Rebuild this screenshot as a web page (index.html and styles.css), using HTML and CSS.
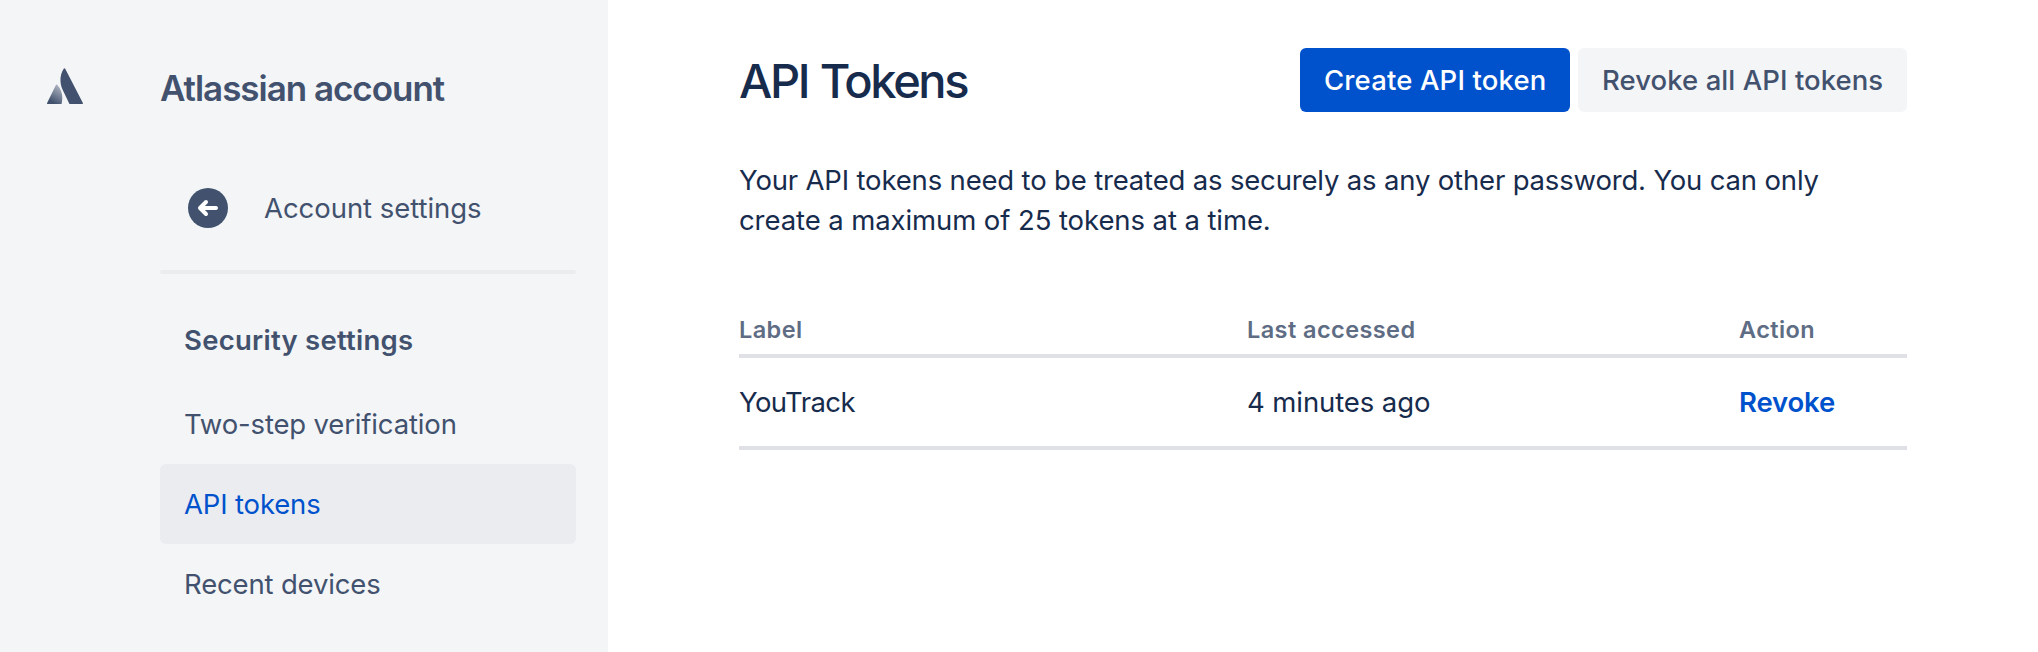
FILE: index.html
```
<!DOCTYPE html>
<html lang="en">
<head>
  <meta charset="utf-8">
  <title>API Tokens</title>
  <link rel="stylesheet" href="styles.css">
</head>
<body>
  <div class="page">
    <div class="sidebar">
      <div class="global-nav">
        <svg class="logo" width="36" height="36" viewBox="0 0 36 36">
          <defs>
            <linearGradient id="logoGradient" x1="14" y1="19" x2="5" y2="34" gradientUnits="userSpaceOnUse">
              <stop offset="0" stop-color="#42526e" stop-opacity="0.4"></stop>
              <stop offset="1" stop-color="#42526e"></stop>
            </linearGradient>
          </defs>
          <path fill="url(#logoGradient)" d="M10.400 17c-.5-.7-1.100-.6-1.500.1L.1 35c-.2.600 0 1 .600 1h13.200c.4 0 .7-.2.800-.6 1.300-6.500.7-13-4.300-18.400z"></path>
          <path fill="#42526e" d="M16.700.8c-3.200 5.200-3.800 10.500-2.800 15.700.6 3 1.700 5.300 2.800 7.500l5.500 11.400c.2.4.5.6.9.6h12.200c.6 0 .9-.5.600-1L18.200.800c-.4-.7-1.100-.7-1.500 0z"></path>
        </svg>
      </div>
      <div class="container-nav">
        <div class="nav-title">Atlassian account</div>
        <a class="back-link">
          <svg class="back-icon" width="40" height="40" viewBox="0 0 40 40">
            <circle cx="20" cy="20" r="20" fill="#42526e"></circle>
            <path d="M12.500 20h15.500M18 14l-6 6 6 6" fill="none" stroke="#fff" stroke-width="4" stroke-linecap="round" stroke-linejoin="round"></path>
          </svg>
          <span>Account settings</span>
        </a>
        <div class="divider"></div>
        <div class="nav-heading">Security settings</div>
        <a class="nav-item">Two-step verification</a>
        <a class="nav-item selected">API tokens</a>
        <a class="nav-item">Recent devices</a>
      </div>
    </div>

    <div class="content">
      <div class="page-header">
        <h1>API Tokens</h1>
        <div class="buttons">
          <button class="button primary">Create API token</button>
          <button class="button default">Revoke all API tokens</button>
        </div>
      </div>

      <p class="description">
        <span class="line">Your API tokens need to be treated as securely as any other password. You can only</span>
        <span class="line last">create a maximum of 25 tokens at a time.</span>
      </p>

      <table class="tokens">
        <thead>
          <tr>
            <th class="col-label">Label</th>
            <th class="col-accessed">Last accessed</th>
            <th class="col-action">Action</th>
          </tr>
        </thead>
        <tbody>
          <tr>
            <td class="token-name">YouTrack</td>
            <td>4 minutes ago</td>
            <td><a class="revoke">Revoke</a></td>
          </tr>
        </tbody>
      </table>
    </div>
  </div>
</body>
</html>
```
FILE: styles.css
```
body {
  margin: 0;
  background: #fff;
  color: #172b4d;
  font-family: Inter, "Liberation Sans", sans-serif;
  font-size: 27.5px;
  line-height: 40px;
}
.page {
  display: flex;
  height: 652px;
  overflow: hidden;
}

/* Sidebar */
.sidebar {
  display: flex;
  width: 608px;
  flex-shrink: 0;
  background: #f4f5f7;
  color: #42526e;
}
.global-nav {
  width: 81px;
  padding: 68px 0 0 47px;
}
.logo {
  display: block;
}
.container-nav {
  flex: 1;
  padding: 68px 32px 0;
}
.nav-title {
  font-size: 35px;
  font-weight: 600;
  letter-spacing: -1.03px;
  white-space: nowrap;
}
.back-link {
  display: flex;
  align-items: center;
  gap: 36px;
  height: 80px;
  margin-top: 60px;
  padding-left: 28px;
  letter-spacing: -0.05px;
}
.back-icon {
  display: block;
}
.divider {
  height: 4px;
  margin-top: 22px;
  border-radius: 2px;
  background: #ebecee;
}
.nav-heading {
  margin-top: 46px;
  padding-left: 24px;
  font-weight: 600;
  letter-spacing: 0.25px;
}
.nav-heading + .nav-item {
  margin-top: 24px;
}
.nav-item {
  display: block;
  padding: 20px 24px;
  border-radius: 6px;
  letter-spacing: -0.16px;
}
.nav-item.selected {
  background: #ebecf0;
  color: #0052cc;
}

/* Main content */
.content {
  flex: 1;
  padding: 48px 131px 0;
}
.page-header {
  display: flex;
  align-items: center;
  justify-content: space-between;
  height: 64px;
}
h1 {
  margin: 0;
  padding-top: 2px;
  font-size: 47px;
  font-weight: 500;
  line-height: 56px;
  letter-spacing: -2.4px;
  word-spacing: 1.5px;
}
.buttons {
  display: flex;
  gap: 8px;
}
.button {
  height: 64px;
  padding: 0 24px;
  border: none;
  border-radius: 6px;
  font-family: inherit;
  font-size: 27.5px;
  font-weight: 500;
  line-height: 64px;
  text-align: left;
  white-space: nowrap;
}
.primary {
  width: 270px;
  background: #0052cc;
  color: #fff;
  letter-spacing: 0.15px;
}
.default {
  width: 329px;
  background: #f4f5f7;
  color: #42526e;
  letter-spacing: 0.06px;
}
.description {
  margin: 48px 0 0;
}
.line {
  display: block;
  letter-spacing: -0.17px;
  white-space: nowrap;
}
.line.last {
  letter-spacing: -0.09px;
}

/* Tokens table */
.tokens {
  width: 1168px;
  margin-top: 70px;
  border-collapse: separate;
  border-spacing: 0;
  table-layout: fixed;
}
.tokens th {
  padding: 0 0 4px;
  border-bottom: 4px solid #dfe1e6;
  color: #5e6c84;
  font-size: 23.5px;
  font-weight: 600;
  letter-spacing: 0.42px;
  text-align: left;
}
.tokens td {
  padding: 24px 0;
  border-bottom: 4px solid #dfe1e6;
  letter-spacing: -0.09px;
}
.col-label {
  width: 508px;
}
.col-accessed {
  width: 492px;
}
.tokens .token-name {
  letter-spacing: -0.6px;
}
.tokens .revoke {
  color: #0052cc;
  font-weight: 600;
  letter-spacing: -0.15px;
}
```
